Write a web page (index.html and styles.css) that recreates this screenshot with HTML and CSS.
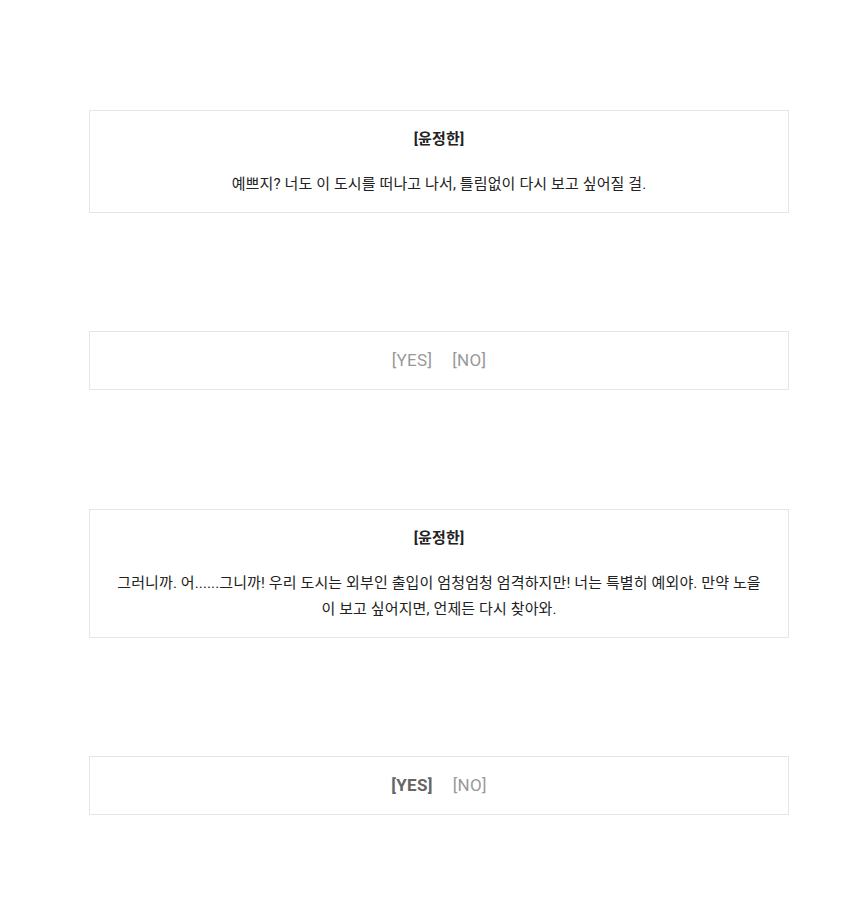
FILE: index.html
```html
<!DOCTYPE html>
<html lang="ko">
<head>
<meta charset="utf-8">
<title>윤정한</title>
<link rel="stylesheet" href="styles.css">
</head>
<body>
<main class="story">
  <section class="box">
    <p class="speaker">[윤정한]</p>
    <p class="line">예쁘지? 너도 이 도시를 떠나고 나서, 틀림없이 다시 보고 싶어질 걸.</p>
  </section>

  <section class="box choices">
    <span class="choice">[YES]</span>
    <span class="choice">[NO]</span>
  </section>

  <section class="box">
    <p class="speaker">[윤정한]</p>
    <p class="line">그러니까. 어......그니까! 우리 도시는 외부인 출입이 엄청엄청 엄격하지만! 너는 특별히 예외야. 만약 노을이 보고 싶어지면, 언제든 다시 찾아와.</p>
  </section>

  <section class="box choices">
    <span class="choice is-picked">[YES]</span>
    <span class="choice">[NO]</span>
  </section>
</main>
</body>
</html>
```

FILE: styles.css
```css
html, body {
  margin: 0;
  padding: 0;
  background: #fff;
}

body {
  font-family: "Roboto", "Noto Sans CJK KR", sans-serif;
  font-size: 15px;
  line-height: 26.25px;
  letter-spacing: 0.12px;
  color: #222;
}

.story {
  width: 700px;
  padding: 110px 0 80px 89px;
  display: flex;
  flex-direction: column;
  gap: 118.4px;
}

.box {
  border: 1px solid #e5e5e5;
  padding: 15px 25px;
  text-align: center;
}

.box p {
  margin: 0;
}

.box .speaker {
  font-weight: 700;
  margin-bottom: 18.5px;
}

.choices {
  display: flex;
  justify-content: center;
  gap: 20px;
  font-size: 17px;
  line-height: 27px;
  letter-spacing: 0.3px;
}

.choice {
  color: #999;
}

.choice.is-picked {
  color: #666;
  font-weight: 700;
}
```
